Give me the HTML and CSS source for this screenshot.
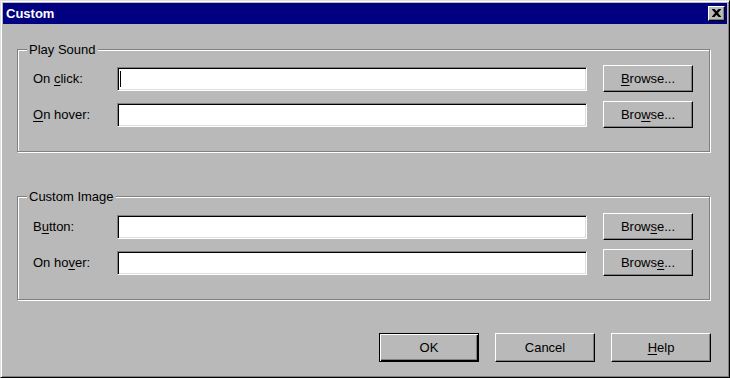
FILE: index.html
```html
<!DOCTYPE html>
<html>
	<head>
		<meta charset="utf-8" />
		<title>Custom</title>
		<link rel="stylesheet" href="styles.css">
	</head>
	<body>
		<div class="window">
			<div class="title-bar">
				<span class="title">Custom</span>
				<div class="close-button">
					<svg width="9" height="8" viewBox="0 0 9 8">
						<path d="M0 0h2.5l2 2.3 2-2.3h2.5v0.5l-3 3.5 3 3.5v0.5h-2.5l-2-2.3-2 2.3h-2.5v-0.5l3-3.5-3-3.5z" fill="#000" />
					</svg>
				</div>
			</div>

			<div class="group group-sound">
				<span class="legend">Play Sound</span>
				<div class="row">
					<div class="label">On <u>c</u>lick:</div>
					<div class="field"><span class="caret"></span></div>
					<div class="button browse"><u>B</u>rowse...</div>
				</div>
				<div class="row">
					<div class="label"><u>O</u>n hover:</div>
					<div class="field"></div>
					<div class="button browse">Bro<u>w</u>se...</div>
				</div>
			</div>

			<div class="group group-image">
				<span class="legend">Custom Image</span>
				<div class="row">
					<div class="label">B<u>u</u>tton:</div>
					<div class="field"></div>
					<div class="button browse">Brow<u>s</u>e...</div>
				</div>
				<div class="row">
					<div class="label">On ho<u>v</u>er:</div>
					<div class="field"></div>
					<div class="button browse">Brows<u>e</u>...</div>
				</div>
			</div>

			<div class="actions">
				<div class="button action default">OK</div>
				<div class="button action">Cancel</div>
				<div class="button action"><u>H</u>elp</div>
			</div>
		</div>
	</body>
</html>
```

FILE: styles.css
```css
body {
	margin: 0px;
	font-family: "Liberation Sans", Arial, sans-serif;
	font-size: 13px;
	color: #000;
}

u {
	text-decoration-thickness: 1px;
	text-underline-offset: 2px;
}

.window {
	box-sizing: border-box;
	width: 730px;
	height: 378px;
	padding: 2px;
	background-color: #b9b9b9;
	border: 1px solid;
	border-color: #dfdfdf #000 #000 #dfdfdf;
	box-shadow: inset 1px 1px #fff, inset -1px -1px #808080;
	display: flex;
	flex-direction: column;
}

.title-bar {
	height: 21px;
	background-color: #000080;
	display: flex;
	align-items: center;
	justify-content: space-between;
	padding: 0px 2px 0px 3px;
}

.title {
	color: #fff;
	font-weight: bold;
	font-size: 13px;
}

.close-button {
	box-sizing: border-box;
	width: 17px;
	height: 15px;
	background-color: #b9b9b9;
	border: 1px solid;
	border-color: #fff #000 #000 #fff;
	box-shadow: inset -1px -1px #808080;
	display: flex;
	align-items: center;
	justify-content: center;
	padding-bottom: 1px;
}

.group {
	position: relative;
	box-sizing: border-box;
	width: 693px;
	margin-left: 14px;
	border: 1px solid #808080;
	box-shadow: inset 1px 1px #fff, 1px 1px #fff;
	padding: 15px 16px 23px 15px;
	display: flex;
	flex-direction: column;
	gap: 9px;
}

.group-sound {
	margin-top: 25px;
	height: 103px;
}

.group-image {
	margin-top: 44px;
	height: 104px;
	padding-top: 16px;
}

.legend {
	position: absolute;
	top: -8px;
	left: 9px;
	padding: 0px 2px;
	line-height: 15px;
	background-color: #b9b9b9;
}

.row {
	height: 27px;
	display: flex;
	align-items: center;
}

.label {
	width: 84px;
	padding-bottom: 1px;
}

.field {
	box-sizing: border-box;
	width: 470px;
	height: 24px;
	background-color: #fff;
	border: 1px solid;
	border-color: #808080 #fff #fff #808080;
	box-shadow: inset 1px 1px #000, inset -1px -1px #dfdfdf;
	padding: 2px 2px;
	margin-right: 16px;
	display: flex;
	align-items: center;
}

.caret {
	width: 1px;
	height: 16px;
	background-color: #000;
}

.button {
	box-sizing: border-box;
	border: 1px solid;
	border-color: #fff #000 #000 #fff;
	box-shadow: inset -1px -1px #808080;
	display: flex;
	align-items: center;
	justify-content: center;
	padding-bottom: 1px;
}

.browse {
	width: 90px;
	height: 27px;
}

.actions {
	margin-top: 33px;
	padding-right: 16px;
	display: flex;
	justify-content: flex-end;
	gap: 16px;
}

.action {
	width: 100px;
	height: 29px;
}

.default {
	border-color: #000;
	box-shadow: inset 1px 1px #fff, inset -1px -1px #000, inset -2px -2px #808080;
}
```
